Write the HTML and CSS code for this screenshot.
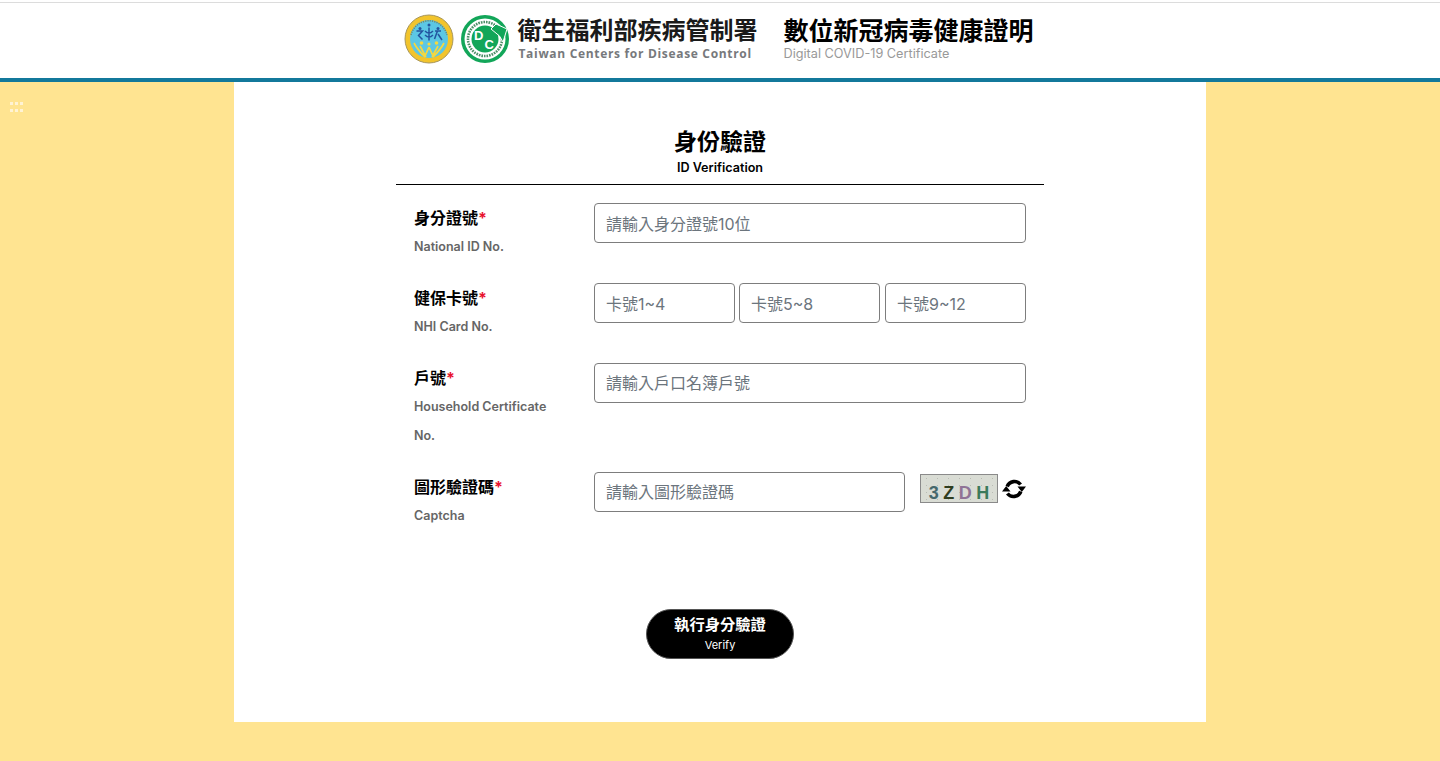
FILE: index.html
```html
<!DOCTYPE html>
<html lang="zh-Hant">
<head>
<meta charset="utf-8">
<title>數位新冠病毒健康證明</title>
<link rel="stylesheet" href="styles.css">
</head>
<body>
<div class="topline"></div>
<header class="header">
  <svg class="emblem" viewBox="0 0 50 50" width="50" height="50" aria-hidden="true">
    <circle cx="25" cy="25" r="24" fill="#f2c42c" stroke="#a8975c" stroke-width="1"/>
    <circle cx="25" cy="25" r="19" fill="#5cc7e4"/>
    <path d="M7 21A18.5 18.5 0 0 1 43 21" fill="none" stroke="#6f8a72" stroke-width="1.5" stroke-dasharray="1.3 1"/>
    <circle cx="25" cy="11" r="1.5" fill="#23549f"/><circle cx="16" cy="14.5" r="1.5" fill="#23549f"/><circle cx="34" cy="14.5" r="1.5" fill="#23549f"/>
    <path d="M12.5 17h6l-4 4.5 4 4M25 13.5v13M21 17c3 3 5 3 8 0M21 21c3 3 5 3 8 0M31 17h6M33.5 17l-3 8M34 20l4 6" fill="none" stroke="#23549f" stroke-width="1.5"/>
    <circle cx="17.5" cy="29" r="1.8" fill="#f5d83f"/><circle cx="32.5" cy="29" r="1.8" fill="#f5d83f"/><circle cx="25" cy="30" r="1.6" fill="#f5d83f"/>
    <path d="M10 29c3 6 7 10 11 14M40 29c-3 6-7 10-11 14M16 32l6 11M34 32l-6 11M25 33l-4 9M25 33l4 9" fill="none" stroke="#f5d83f" stroke-width="1.7"/>
  </svg>
  <svg class="dc" viewBox="0 0 50 50" width="50" height="50" aria-hidden="true">
    <circle cx="25" cy="25" r="24" fill="#12a659"/>
    <circle cx="25" cy="25" r="20.5" fill="#fff"/>
    <circle cx="25" cy="25" r="17" fill="none" stroke="#4d8f68" stroke-width="2.6" stroke-dasharray="1.6 1"/>
    <circle cx="25" cy="25" r="13.5" fill="#12a659"/>
    <path d="M36 10 47 15 43 28 39.5 22 31 15z" fill="#12a659" stroke="#fff" stroke-width="1"/>
    <text class="dc-letter" x="14" y="26">D</text>
    <text class="dc-letter" x="24.5" y="35">C</text>
  </svg>
  <div class="org">
    <div class="org-zh">衛生福利部疾病管制署</div>
    <div class="org-en">Taiwan Centers for Disease Control</div>
  </div>
  <div class="app">
    <div class="app-zh">數位新冠病毒健康證明</div>
    <div class="app-en">Digital COVID-19 Certificate</div>
  </div>
</header>
<div class="page">
  <div class="dots" aria-hidden="true"><i></i><i></i><i></i><i></i><i></i><i></i></div>
  <main class="card">
    <div class="form">
      <div class="title">
        <h1>身份驗證</h1>
        <p>ID Verification</p>
      </div>
      <div class="row">
        <div class="label"><div class="zh">身分證號<span class="req">*</span></div><div class="en">National ID No.</div></div>
        <div class="fields"><input class="input" placeholder="請輸入身分證號10位"></div>
      </div>
      <div class="row">
        <div class="label"><div class="zh">健保卡號<span class="req">*</span></div><div class="en">NHI Card No.</div></div>
        <div class="fields cards">
          <input class="input" placeholder="卡號1~4">
          <input class="input" placeholder="卡號5~8">
          <input class="input" placeholder="卡號9~12">
        </div>
      </div>
      <div class="row">
        <div class="label"><div class="zh">戶號<span class="req">*</span></div><div class="en">Household Certificate No.</div></div>
        <div class="fields"><input class="input input-zh" placeholder="請輸入戶口名簿戶號"></div>
      </div>
      <div class="row">
        <div class="label"><div class="zh">圖形驗證碼<span class="req">*</span></div><div class="en">Captcha</div></div>
        <div class="fields captcha-row">
          <input class="input input-zh captcha-input" placeholder="請輸入圖形驗證碼">
          <div class="captcha"><b class="c1">3</b><b class="c2">Z</b><b class="c3">D</b><b class="c4">H</b></div>
          <svg class="refresh" viewBox="0 0 24 24" width="24" height="24" aria-hidden="true">
            <path d="M5.2 9.5A7.8 7.8 0 0 1 18.6 7.5M18.8 14.5A7.8 7.8 0 0 1 5.4 16.5" fill="none" stroke="#000" stroke-width="3.6"/>
            <path d="M15.5 9.5h8.5L19.8 15zM0 14.5h8.5L4.2 9z" fill="#000"/>
          </svg>
        </div>
      </div>
      <div class="actions">
        <button class="verify" type="button"><span class="v-zh">執行身分驗證</span><span class="v-en">Verify</span></button>
      </div>
    </div>
  </main>
</div>
</body>
</html>
```
FILE: styles.css
```css
* { box-sizing: border-box; }
html, body { margin: 0; height: 100%; }
body {
  background: #ffe491;
  font-family: Inter, "Noto Sans CJK TC", sans-serif;
  color: #000;
  overflow: hidden;
}
.topline { height: 3px; background: #fff; border-top: 2px solid #fff; border-bottom: 1px solid #dcdcdc; }
.header {
  height: 79px;
  background: #fff;
  border-bottom: 4px solid #13799b;
  display: flex;
  justify-content: center;
  align-items: flex-start;
  padding-top: 11px;
}
.emblem { margin-right: 6px; flex: none; }
.dc { margin-right: 7px; flex: none; }
.dc-letter { font: 700 13px "Liberation Sans", sans-serif; fill: #fff; }
.org { width: 266px; padding-top: 1px; }
.org-zh { font-size: 24px; font-weight: 700; line-height: 32px; color: #1a1a1a; white-space: nowrap; }
.org-en { font-size: 12px; font-weight: 700; line-height: 14px; letter-spacing: 0.68px; color: #77797c; white-space: nowrap; font-family: "Open Sans", sans-serif; margin-left: 1px; }
.app { padding: 1px 2px 0 0; }
.app-zh { font-size: 25px; font-weight: 700; line-height: 32px; white-space: nowrap; }
.app-en { font-size: 12.7px; line-height: 14px; color: #999; white-space: nowrap; }
.page { display: flex; justify-content: center; position: relative; }
.dots { position: absolute; left: 10px; top: 20px; display: grid; grid-template-columns: repeat(3, 3px); gap: 4px 2px; }
.dots i { width: 3px; height: 3px; background: #fff3d4; }
.card { width: 972px; height: 640px; background: #fff; display: flex; justify-content: center; }
.form { width: 648px; }
.title { text-align: center; padding-top: 44px; height: 103px; border-bottom: 1px solid #000; margin-bottom: 18px; }
.title h1 { margin: 0; font-size: 23px; line-height: 32px; font-weight: 700; }
.title p { margin: 1px 0 0; font-size: 12.6px; line-height: 18px; font-weight: 600; }
.row { display: flex; padding: 0 18px; margin-bottom: 22px; }
.label { width: 180px; flex: none; }
.zh { font-size: 16px; line-height: 29px; font-weight: 700; padding-top: 1px; margin-bottom: -1px; }
.req { color: #e8112d; }
.en { font-size: 12.5px; line-height: 29px; font-weight: 600; color: #666; width: 140px; }
.fields { flex: 1; display: flex; }
.cards .input { width: 141px; flex: none; }
.cards .input + .input { margin-left: 4px; }
.cards .input:last-child { margin-left: 5px; }
.input {
  width: 100%;
  height: 40px;
  padding: 1px 11px 0;
  border: 1px solid #7d7d7d;
  border-radius: 4px;
  font: 16px Inter, "Noto Sans CJK TC", sans-serif;
  background: #fff;
}
.input-zh { padding-top: 0; }
.input::placeholder { color: #6c757d; opacity: 1; }
.captcha-input { width: 311px; flex: none; }
.captcha {
  width: 78px;
  height: 29px;
  margin: 2px 0 0 15px;
  background-color: #d9dcd4;
  background-image: radial-gradient(#b9bcb4 0.7px, transparent 1px);
  background-size: 11px 7px;
  border: 1px solid #8a8a8a;
  display: flex;
  justify-content: center;
  align-items: flex-end;
  gap: 4.5px;
  font: 700 18px/17px "Liberation Sans", sans-serif;
}
.c1 { color: #46686c; } .c2 { color: #2f3d1f; } .c3 { color: #8f7396; } .c4 { color: #3b7a5a; }
.refresh { margin: 5px 0 0 4px; flex: none; }
.actions { display: flex; justify-content: center; padding-top: 57px; }
.verify {
  width: 148px;
  height: 50px;
  border-radius: 25px;
  background: #000;
  color: #fff;
  border: 1px solid #555;
  display: flex;
  flex-direction: column;
  align-items: center;
  justify-content: center;
  padding: 0;
  font-family: Inter, "Noto Sans CJK TC", sans-serif;
}
.v-zh { font-size: 15.3px; line-height: 21px; font-weight: 700; }
.v-en { font-size: 11px; line-height: 18px; margin-top: 1px; }
```
